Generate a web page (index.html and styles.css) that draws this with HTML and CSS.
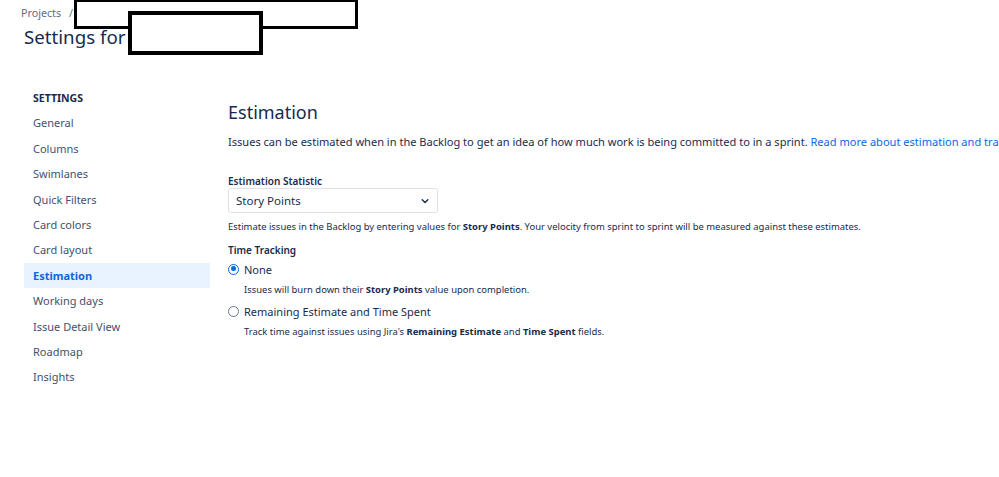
FILE: index.html
```html
<!DOCTYPE html>
<html>
  <head>
    <title>Settings - Estimation</title>
    <link rel="stylesheet" href="styles.css">
  </head>
  <body>
    <header class="page-header">
      <div class="breadcrumbs">
        <a href="#">Projects</a>
        <span class="crumb-sep">/</span>
      </div>
      <h1 class="page-title">Settings for</h1>

      <!-- redacted project name -->
      <div class="redact redact-crumb"></div>
      <div class="redact redact-title"></div>
    </header>

    <div class="layout">
      <aside class="sidebar">
        <h2 class="sidebar-title">SETTINGS</h2>
        <ul class="sidebar-list">
          <li><a href="#">General</a></li>
          <li><a href="#">Columns</a></li>
          <li><a href="#">Swimlanes</a></li>
          <li><a href="#">Quick Filters</a></li>
          <li><a href="#">Card colors</a></li>
          <li><a href="#">Card layout</a></li>
          <li class="active"><a href="#">Estimation</a></li>
          <li><a href="#">Working days</a></li>
          <li><a href="#">Issue Detail View</a></li>
          <li><a href="#">Roadmap</a></li>
          <li><a href="#">Insights</a></li>
        </ul>
      </aside>

      <main class="content">
        <h2 class="content-title">Estimation</h2>
        <p class="intro">
          Issues can be estimated when in the Backlog to get an idea of how much work is being committed to in a sprint.
          <a href="#">Read more about estimation and tracking</a>
        </p>

        <label class="field-label" for="statistic">Estimation Statistic</label>
        <div class="select">
          <span>Story Points</span>
          <svg width="10" height="10" viewBox="0 0 10 10">
            <path d="M2.2 3.8 L5 6.4 L7.8 3.8" fill="none" stroke="#172b4d" stroke-width="1.4" stroke-linecap="round" stroke-linejoin="round"/>
          </svg>
        </div>
        <p class="help">Estimate issues in the Backlog by entering values for <b>Story Points</b>. Your velocity from sprint to sprint will be measured against these estimates.</p>

        <div class="field-label tracking-label">Time Tracking</div>
        <div class="radio-row">
          <span class="radio checked"></span>
          <span>None</span>
        </div>
        <p class="help radio-help">Issues will burn down their <b>Story Points</b> value upon completion.</p>
        <div class="radio-row">
          <span class="radio"></span>
          <span>Remaining Estimate and Time Spent</span>
        </div>
        <p class="help radio-help">Track time against issues using Jira's <b>Remaining Estimate</b> and <b>Time Spent</b> fields.</p>
      </main>
    </div>
  </body>
</html>
```

FILE: styles.css
```css
* {
  box-sizing: border-box;
  margin: 0;
  padding: 0;
}

body {
  font-family: "Noto Sans", "Open Sans", sans-serif;
  color: #172b4d;
  background-color: #ffffff;
  width: 999px;
  height: 477px;
  overflow: hidden;
}

a {
  text-decoration: none;
  color: inherit;
}

/* Cabecera */
.page-header {
  position: relative;
  padding: 5px 0 0 21px;
  height: 90px;
}

.breadcrumbs {
  font-size: 10.7px;
  line-height: 16px;
  color: #5e6c84;
  display: flex;
  gap: 8px;
}

.page-title {
  margin: 2px 0 0 3px;
  font-size: 18.7px;
  line-height: 28px;
  font-weight: 400;
  color: #172b4d;
}

.redact {
  position: absolute;
  background-color: #ffffff;
  border: 3px solid #000000;
}

.redact-crumb {
  left: 74px;
  top: -1px;
  width: 284px;
  height: 30px;
}

.redact-title {
  left: 128px;
  top: 11px;
  width: 135px;
  height: 44px;
  border-width: 4px;
}

/* Layout principal */
.layout {
  display: flex;
  gap: 18px;
  padding-left: 24px;
}

.sidebar {
  width: 186px;
  flex-shrink: 0;
}

.sidebar-title {
  font-size: 10.5px;
  line-height: 16px;
  font-weight: 700;
  color: #172b4d;
  padding-left: 9px;
  margin-bottom: 4.3px;
}

.sidebar-list {
  list-style: none;
}

.sidebar-list a {
  display: block;
  padding-left: 9px;
  font-size: 11px;
  line-height: 25.4px;
  color: #42526e;
}

.sidebar-list .active a {
  background-color: #e9f2ff;
  color: #0c66e4;
  font-weight: 700;
}

/* Contenido */
.content {
  flex: 1;
  min-width: 0;
  padding-top: 10px;
  white-space: nowrap;
  overflow: hidden;
}

.content-title {
  font-size: 18px;
  line-height: 24px;
  font-weight: 400;
  color: #172b4d;
}

.intro {
  margin-top: 8px;
  font-size: 11.05px;
  line-height: 20px;
  color: #172b4d;
}

.intro a {
  color: #0c66e4;
}

.field-label {
  display: block;
  margin-top: 22px;
  font-size: 10px;
  line-height: 14px;
  font-weight: 600;
  color: #172b4d;
}

.select {
  display: flex;
  align-items: center;
  justify-content: space-between;
  width: 210px;
  height: 25px;
  margin-top: 0;
  padding: 0 7px;
  border: 1px solid #dfe1e6;
  border-radius: 3px;
  font-size: 11.5px;
  color: #172b4d;
}

.help {
  margin-top: 6px;
  font-size: 9.45px;
  line-height: 16px;
  color: #172b4d;
}

.help b {
  font-weight: 700;
}

.tracking-label {
  margin-top: 7px;
  line-height: 16px;
}

.radio-row {
  display: flex;
  align-items: center;
  gap: 5px;
  margin-top: 1px;
  height: 20px;
  font-size: 11px;
  color: #172b4d;
}

.radio-row + .radio-help {
  margin-top: 3px;
}

.radio-help + .radio-row {
  margin-top: 3px;
}

.radio-help {
  padding-left: 16px;
}

.radio {
  width: 11px;
  height: 11px;
  border-radius: 50%;
  border: 1.5px solid #6b778c;
  background-color: #ffffff;
  position: relative;
}

.radio.checked {
  border-color: #0c66e4;
}

.radio.checked::after {
  content: "";
  position: absolute;
  left: 1.5px;
  top: 1.5px;
  width: 5px;
  height: 5px;
  border-radius: 50%;
  background-color: #0c66e4;
}
```
